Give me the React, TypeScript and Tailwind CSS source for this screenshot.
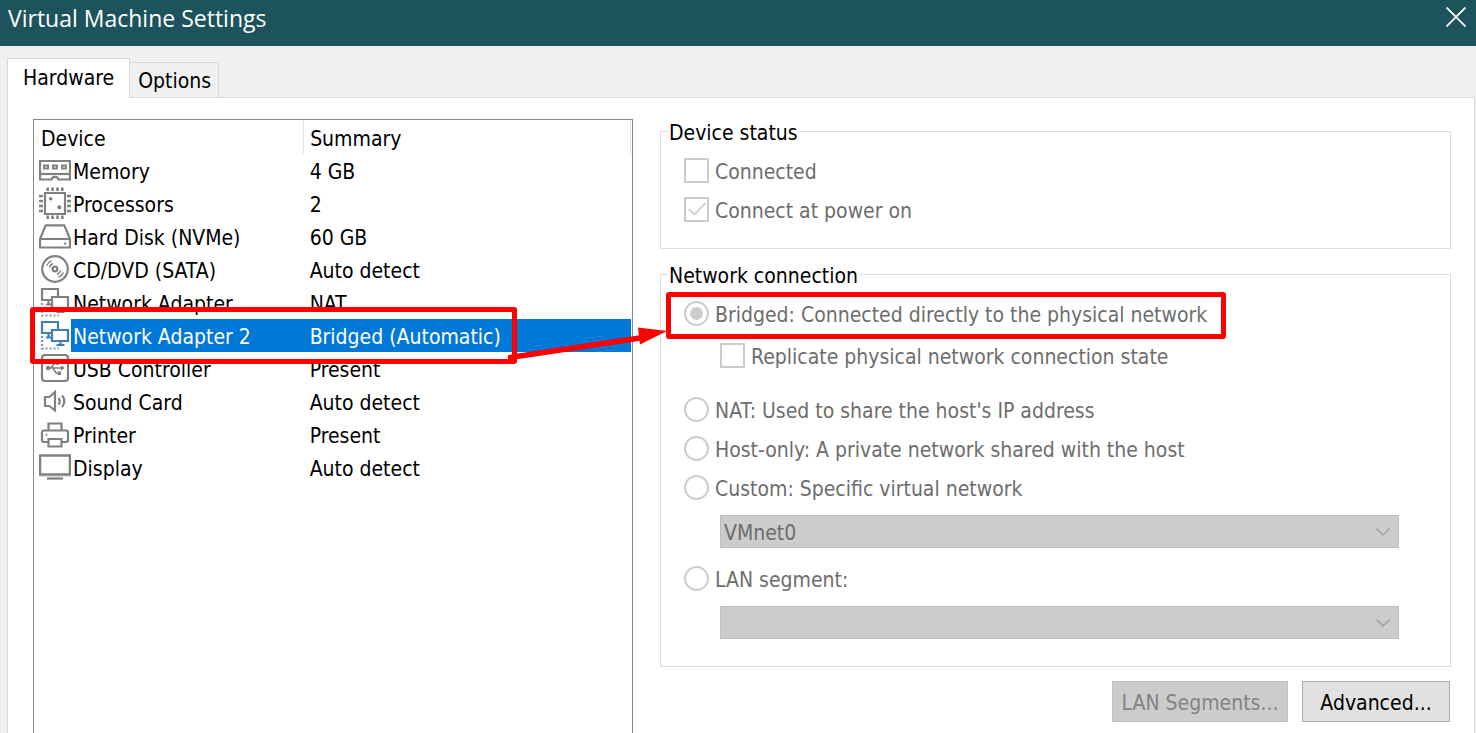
import type { ReactNode } from "react";

const GLYPHS: Record<string, ReactNode> = {
  memory: (
    <>
      <path d="M1 25.500V7h30v18.500H19.500c-1-3.500-6-3.500-7 0Z" />
      <path d="M1 20h30" />
      <path d="M5 11.500h4v3H5zM14 11.500h4v3h-4zM23 11.500h4v3h-4z" strokeWidth="1.900" />
    </>
  ),
  cpu: (
    <>
      <path d="M6 6h20v21H6z" />
      <path
        d="M8.700.500v3.500M13.500.500v3.500M18.500.500v3.500M23.300.500v3.500M8.700 28.500v3.500M13.500 28.500v3.500M18.500 28.500v3.500M23.300 28.500v3.500M0 9h4M0 14h4M0 19h4M0 24h4M28 9h4M28 14h4M28 19h4M28 24h4"
        strokeWidth="2.600"
      />
      <circle cx="11.700" cy="11.700" r="1.800" fill="currentColor" stroke="none" />
      <circle cx="20.300" cy="20.300" r="2" fill="currentColor" stroke="none" />
    </>
  ),
  disk: (
    <>
      <path d="M1 19 6.700 5.300h18.600L31 19V27.500H1ZM1 19h30" />
      <circle cx="26" cy="23.600" r="1.200" fill="currentColor" stroke="none" />
    </>
  ),
  disc: (
    <>
      <circle cx="16" cy="16" r="12.800" />
      <circle cx="16" cy="16" r="2.300" />
      <path d="M7.700 12.500q1.300-3 4.800-4.700M10.300 14.500q1-2.700 3.700-4M24.300 19.500q-1.300 3-4.800 4.700M21.700 17.500q-1 2.700-3.700 4" strokeWidth="1.500" />
    </>
  ),
  network: (
    <>
      <path d="M12.500 14H3V3h16v7M9.500 14v4.500M7 18.500h5.500M13 11h16v11H13zM21.500 22v3.500M17.500 26h8" />
      <path d="M3 17v12.500h17" strokeDasharray="2 2" opacity="0.8" />
    </>
  ),
  usb: (
    <>
      <rect x="3" y="3" width="26" height="26" rx="3" />
      <path d="M9 16h13M12 16l3-4.500h3M14 16l3 5h2" strokeWidth="1.500" />
      <path d="m22 13.500 4 2.500-4 2.500zM18.500 19.500h3.500v3.500h-3.500z" fill="currentColor" stroke="none" />
      <circle cx="9" cy="16" r="2.200" fill="currentColor" stroke="none" />
      <circle cx="18.500" cy="11.500" r="1.700" fill="currentColor" stroke="none" />
    </>
  ),
  sound: <path d="M6 12h4.500L16 7v18.500L10.500 21H6ZM19.500 13q2.500 3.300 0 6.600M23 10.500q4.800 5.800 0 11.500" />,
  printer: (
    <>
      <path d="M9.500 12V5.500h13V12M9 24H5q-2 0-2-2v-7.500q0-2 2-2h22q2 0 2 2V22q0 2-2 2h-4" />
      <path d="M9.500 21h13v7.500h-13z" />
      <circle cx="7.400" cy="16.700" r="1" fill="currentColor" stroke="none" />
    </>
  ),
  display: (
    <>
      <path d="M1 4.500h30V23.500H1z" strokeWidth="2.500" />
      <path d="M0 25.200h32" strokeWidth="1" opacity="0.35" />
      <path d="M8 27.500h16" />
    </>
  ),
};

function DeviceIcon({ name }: { name: string }) {
  return (
    <svg viewBox="0 0 32 33" className="block h-[33px] w-8" fill="none" stroke="currentColor" strokeWidth="2.2" aria-hidden="true">
      {GLYPHS[name]}
    </svg>
  );
}

const DEVICES = [
  { icon: "memory", name: "Memory", summary: "4 GB" },
  { icon: "cpu", name: "Processors", summary: "2" },
  { icon: "disk", name: "Hard Disk (NVMe)", summary: "60 GB" },
  { icon: "disc", name: "CD/DVD (SATA)", summary: "Auto detect" },
  { icon: "network", name: "Network Adapter", summary: "NAT" },
  { icon: "network", name: "Network Adapter 2", summary: "Bridged (Automatic)", selected: true },
  { icon: "usb", name: "USB Controller", summary: "Present" },
  { icon: "sound", name: "Sound Card", summary: "Auto detect" },
  { icon: "printer", name: "Printer", summary: "Present" },
  { icon: "display", name: "Display", summary: "Auto detect" },
];

function DeviceTable() {
  return (
    <div className="relative border border-b-0 border-[#828790] pr-px">
      <table className="w-full table-fixed border-collapse text-left leading-[29px]">
        <colgroup>
          <col className="w-[37px]" />
          <col className="w-[39%]" />
          <col />
        </colgroup>
        <thead>
          <tr className="h-[34px]">
            <th colSpan={2} className="border-r border-[#e5e5e5] p-0 pl-[7px] pt-[5px] font-normal">Device</th>
            <th className="border-r border-[#e5e5e5] p-0 pl-1.5 pt-[5px] font-normal">Summary</th>
          </tr>
        </thead>
        <tbody>
          {DEVICES.map((d) => (
            <tr key={d.name} aria-selected={d.selected} className="h-[33px]">
              <td className={d.selected ? "p-0 pl-[5px] text-[#3f80b0]" : "p-0 pl-[5px] text-[#808080]"}>
                <DeviceIcon name={d.icon} />
              </td>
              <td className={d.selected ? "bg-[#0078d7] p-0 pl-0.5 pt-1 text-white" : "p-0 pl-0.5 pt-1"}>{d.name}</td>
              <td className={d.selected ? "bg-[#0078d7] p-0 pl-1.5 pt-1 text-white" : "p-0 pl-1.5 pt-1"}>{d.summary}</td>
            </tr>
          ))}
        </tbody>
      </table>
      <div className="pointer-events-none absolute -left-1 top-[187px] h-[57px] w-[487px] rounded-[3px] border-[5px] border-[#fe0000]" />
    </div>
  );
}

type ChoiceProps = { id: string; type: "radio" | "checkbox"; label: string; checked?: boolean };

function Choice({ id, type, label, checked = false }: ChoiceProps) {
  return (
    <div className="flex h-[39px] items-center gap-1.5 text-[#6d6d6d]">
      <span className="grid size-[25px] shrink-0 place-items-center">
        <input
          id={id}
          type={type}
          name={type === "radio" ? "connection" : id}
          defaultChecked={checked}
          disabled
          className={
            type === "radio"
              ? "col-start-1 row-start-1 size-[25px] appearance-none rounded-full border-2 border-[#cccccc] bg-white"
              : "col-start-1 row-start-1 size-[25px] appearance-none border-2 border-[#cccccc] bg-white"
          }
        />
        {checked && type === "radio" && <span className="col-start-1 row-start-1 size-[13px] rounded-full bg-[#cccccc]" />}
        {checked && type === "checkbox" && (
          <svg viewBox="0 0 25 25" className="col-start-1 row-start-1 size-[25px]" fill="none" stroke="#c6c6c6" strokeWidth="1.6" aria-hidden="true">
            <path d="m4.500 12 6 5.500L21.500 6" />
          </svg>
        )}
      </span>
      <label htmlFor={id} className="whitespace-nowrap pt-1">{label}</label>
    </div>
  );
}

function Dropdown({ label, value }: { label: string; value: string }) {
  return (
    <div className="ml-9 mr-7 grid items-center">
      <select
        aria-label={label}
        disabled
        className="col-start-1 row-start-1 h-[33px] w-full appearance-none border border-[#bfbfbf] bg-[#cccccc] pl-[3px] pt-0.5 text-[#6d6d6d] opacity-100"
      >
        <option>{value}</option>
      </select>
      <svg viewBox="0 0 14 8" className="col-start-1 row-start-1 mr-[9px] h-2 w-3.5 justify-self-end" fill="none" stroke="#9b9b9b" strokeWidth="1.2" aria-hidden="true">
        <path d="m.5.5 6.500 6.500L13.500.5" />
      </svg>
    </div>
  );
}

function Group({ title, children }: { title: string; children: ReactNode }) {
  return (
    <fieldset className="min-w-0 border border-[#dcdcdc] px-[23px]">
      <legend className="-ml-4 px-px pt-1 leading-5">{title}</legend>
      {children}
    </fieldset>
  );
}

export default function App() {
  return (
    <div className="flex min-h-screen flex-col bg-[#f0f0f0] font-['DejaVu_Sans_Condensed','DejaVu_Sans',sans-serif] text-[21px] text-black">
      <header className="flex h-[46px] items-start justify-between bg-[#1c535c] pl-2 pr-2.5 text-white">
        <h1 className="font-['Open_Sans',sans-serif] text-[23px] leading-9">Virtual Machine Settings</h1>
        <button type="button" aria-label="Close" className="mt-[7px]">
          <svg viewBox="0 0 20 20" className="block size-5" fill="none" stroke="currentColor" strokeWidth="1.8" aria-hidden="true">
            <path d="m.5.5 19 19M19.500.5l-19 19" />
          </svg>
        </button>
      </header>

      <main className="flex grow flex-col pl-[7px] pr-px pt-3">
        <div role="tablist" className="z-10 -mb-px flex items-end">
          <button type="button" role="tab" aria-selected="true" className="h-10 border border-b-0 border-[#d9d9d9] bg-white px-[15px] pt-px">
            Hardware
          </button>
          <button type="button" role="tab" aria-selected="false" className="h-9 border border-l-0 border-[#d9d9d9] pl-2 pr-[7px] pt-[3px]">
            Options
          </button>
        </div>

        <section role="tabpanel" className="grid grow grid-cols-[600fr_791fr] gap-[27px] border border-b-0 border-[#d9d9d9] bg-white pl-[25px] pr-[23px] pt-[21px]">
          <DeviceTable />

          <div className="relative flex flex-col">
            <Group title="Device status">
              <div className="pb-[19px] pt-2">
                <Choice id="connected" type="checkbox" label="Connected" />
                <Choice id="power-on" type="checkbox" label="Connect at power on" checked />
              </div>
            </Group>

            <div className="mt-[13px]">
              <Group title="Network connection">
                <div className="pb-[27px] pt-2">
                  <Choice id="bridged" type="radio" label="Bridged: Connected directly to the physical network" checked />
                  <div className="mb-[15px] ml-9 mt-[3px]">
                    <Choice id="replicate" type="checkbox" label="Replicate physical network connection state" />
                  </div>
                  <Choice id="nat" type="radio" label="NAT: Used to share the host's IP address" />
                  <Choice id="host-only" type="radio" label="Host-only: A private network shared with the host" />
                  <Choice id="custom" type="radio" label="Custom: Specific virtual network" />
                  <div className="mb-[11px] mt-2">
                    <Dropdown label="Virtual network" value="VMnet0" />
                  </div>
                  <Choice id="lan" type="radio" label="LAN segment:" />
                  <div className="mt-2">
                    <Dropdown label="LAN segment" value="" />
                  </div>
                </div>
              </Group>
            </div>

            <div className="mt-3.5 flex justify-end gap-3.5 pb-2.5 pr-px">
              <button type="button" disabled className="h-[41px] w-44 border border-[#bfbfbf] bg-[#cccccc] pt-1 text-[#838383]">
                LAN Segments...
              </button>
              <button type="button" className="h-[41px] w-[148px] border border-[#adadad] bg-[#e1e1e1] pt-1">
                Advanced...
              </button>
            </div>

            <div className="pointer-events-none absolute left-1.5 top-[173px] h-[47px] w-[560px] rounded-[3px] border-[5px] border-[#fe0000]" />
            <svg viewBox="0 0 160 40" className="pointer-events-none absolute -left-[152px] top-[206px] h-10 w-40" aria-hidden="true">
              <path d="M2 32.500 132 13" stroke="#fe0000" strokeWidth="5.500" strokeLinecap="round" />
              <path d="M130 2.500 159 6l-27 13.500z" fill="#fe0000" />
            </svg>
          </div>
        </section>
      </main>
    </div>
  );
}
